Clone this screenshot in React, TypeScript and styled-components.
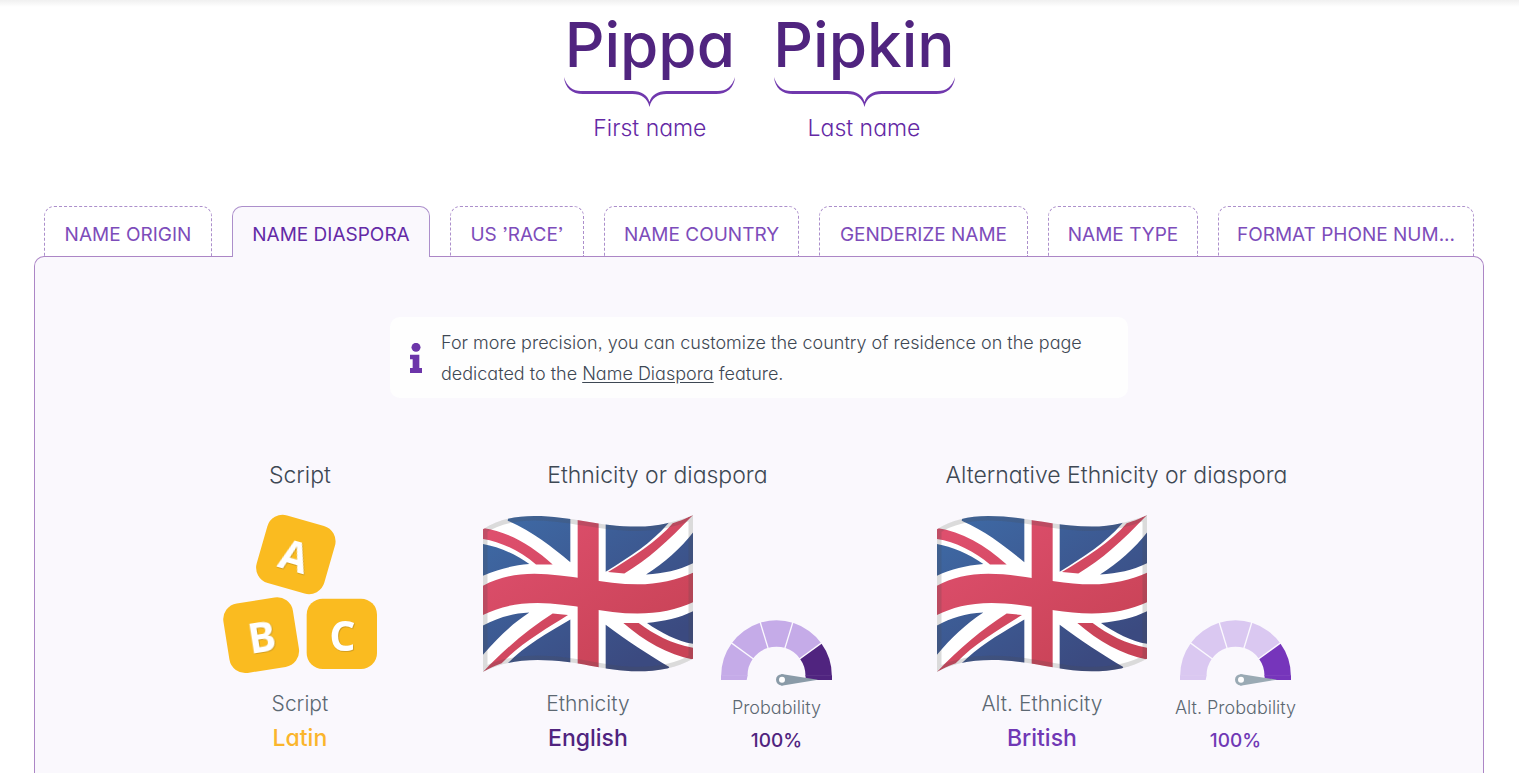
import React from 'react';
import styled, { createGlobalStyle } from 'styled-components';

const GlobalStyle = createGlobalStyle`
  *, *::before, *::after { box-sizing: border-box; }
  body {
    margin: 0;
    background: #fff;
    color: #3e4854;
    font-family: Inter, "Liberation Sans", sans-serif;
    font-feature-settings: "cv11", "ss03";
    font-weight: 300;
  }
`;

const Page = styled.div`
  display: flex;
  flex-direction: column;
  min-height: 100vh;
  background: linear-gradient(#f0f0f0, #fff 7px);
`;

const FullName = styled.header`
  display: flex;
  justify-content: center;
  gap: 38px;
  padding-top: 15px;
`;

const NamePart = styled.div`
  display: flex;
  flex-direction: column;
  align-items: center;
`;

const NameText = styled.div`
  font-size: 62px;
  line-height: 60px;
  font-weight: 500;
  color: #50247f;
`;

const BraceSvg = styled.svg`
  display: block;
  margin-top: 2px;
  fill: #7038ad;
`;

const NameLabel = styled.div`
  margin-top: 6px;
  font-size: 23px;
  line-height: 30px;
  color: #6429a5;
`;

const Main = styled.main`
  flex: 1;
  display: flex;
  flex-direction: column;
  margin: 63px 35px 0 34px;
`;

const Tabs = styled.div`
  display: grid;
  grid-template-columns: 168fr 198fr 134fr 195fr 209fr 150fr 256fr;
  gap: 20px;
  padding: 0 10px;
`;

const Tab = styled.button<{ $active?: boolean }>`
  min-width: 0;
  height: ${p => (p.$active ? 51 : 50)}px;
  margin-bottom: ${p => (p.$active ? -1 : 0)}px;
  padding: ${p => (p.$active ? 5 : 6)}px 0 0;
  position: relative;
  border: 1px ${p => (p.$active ? 'solid' : 'dashed')} #ac8fcb;
  border-bottom: 0;
  border-radius: 10px 10px 0 0;
  background: ${p => (p.$active ? '#faf8fd' : '#fff')};
  color: ${p => (p.$active ? '#632aa6' : '#7d4cba')};
  font: inherit;
  font-size: 19px;
  line-height: 28px;
  font-weight: 400;
  white-space: nowrap;
  cursor: pointer;
`;

const Panel = styled.section`
  flex: 1;
  display: flex;
  flex-direction: column;
  align-items: center;
  padding: 60px 20px 0;
  border: 1px solid #ac86c6;
  border-bottom: 0;
  border-radius: 10px 10px 0 0;
  background: #faf8fd;
`;

const Notice = styled.div`
  display: flex;
  align-items: center;
  gap: 19px;
  width: 100%;
  max-width: 738px;
  padding: 10px 20px 9px;
  border-radius: 10px;
  background: #fefefe;

  p {
    margin: 0;
    font-size: 18px;
    line-height: 31px;
  }

  a { color: inherit; text-underline-offset: 2px; }
  svg { flex: none; fill: #6c35a9; }
`;

const Results = styled.div`
  display: flex;
  justify-content: center;
  gap: 105px;
  margin-top: 62px;
`;

const Result = styled.section`
  display: flex;
  flex-direction: column;
  align-items: center;
`;

const Heading = styled.h2`
  margin: 0 0 25px;
  font-size: 23px;
  line-height: 30px;
  font-weight: 300;
`;

const Stats = styled.div`
  display: flex;
  align-items: flex-end;
  gap: 28px;
`;

const Stat = styled.div`
  display: flex;
  flex-direction: column;
  align-items: center;

  svg { display: block; }
`;

const Caption = styled.div<{ $small?: boolean }>`
  margin-top: ${p => (p.$small ? 9 : 18)}px;
  font-size: ${p => (p.$small ? 18 : 21)}px;
  line-height: ${p => (p.$small ? 26 : 28)}px;
  color: #5c6872;
`;

const Value = styled.div<{ $small?: boolean; $color: string }>`
  margin-top: ${p => (p.$small ? 8 : 5)}px;
  font-size: ${p => (p.$small ? 19 : 23)}px;
  line-height: ${p => (p.$small ? 24 : 30)}px;
  font-weight: 500;
  color: ${p => p.$color};
`;

function Brace({ width: w }: { width: number }) {
  const m = w / 2;
  const d =
    `M0 0 C3 10 9 14 17 14 H${m - 17} C${m - 8} 14 ${m - 2} 18 ${m} 25 ` +
    `C${m + 2} 18 ${m + 8} 14 ${m + 17} 14 H${w - 17} C${w - 9} 14 ${w - 3} 10 ${w} 0 ` +
    `C${w - 1} 11 ${w - 8} 17 ${w - 19} 17 H${m + 17} C${m + 8} 17 ${m + 2} 21 ${m} 30 ` +
    `C${m - 2} 21 ${m - 8} 17 ${m - 17} 17 H19 C8 17 1 11 0 0Z`;
  return (
    <BraceSvg width={w} height={30} viewBox={`0 0 ${w} 30`} aria-hidden>
      <path d={d} />
    </BraceSvg>
  );
}

const BlocksSvg = styled.svg`
  overflow: visible;

  text {
    fill: #fff;
    font-family: "Open Sans", sans-serif;
    font-weight: 700;
    font-size: 124px;
    text-anchor: middle;
    filter: drop-shadow(2px 2px 1px rgba(90, 70, 30, 0.35));
  }
`;

function Blocks() {
  return (
    <BlocksSvg width={156} height={157} viewBox="66 195 468 471" aria-hidden>
      <g fill="#fabb20">
        <rect x={182} y={208} width={211} height={211} rx={48} transform="rotate(16 287.5 313.5)" />
        <rect x={78} y={450} width={211} height={211} rx={48} transform="rotate(-9 183.5 555.5)" />
        <rect x={320} y={446} width={211} height={211} rx={48} />
      </g>
      <g transform="rotate(16 282 320)"><text x={282} y={364}>A</text></g>
      <g transform="rotate(-9 186 562)"><text x={186} y={606}>B</text></g>
      <text x={427} y={602}>C</text>
    </BlocksSvg>
  );
}

function Flag({ id }: { id: string }) {
  const outline =
    'M36 88 C80 60 130 48 190 48 C300 48 380 80 500 80 C560 80 620 65 666 45 V478 C620 505 560 516 500 516 C400 516 320 482 200 482 C130 482 80 495 36 518Z';
  return (
    <svg width={210} height={157} viewBox="36 45 630 473" preserveAspectRatio="none" aria-hidden>
      <defs>
        <clipPath id={`${id}-clip`}><path d={outline} /></clipPath>
        <linearGradient id={`${id}-blue`} gradientUnits="userSpaceOnUse" x1={150} y1={50} x2={450} y2={510}>
          <stop offset="0" stopColor="#3e68a3" />
          <stop offset="1" stopColor="#3b4a80" />
        </linearGradient>
        <linearGradient id={`${id}-red`} gradientUnits="userSpaceOnUse" x1={150} y1={50} x2={450} y2={510}>
          <stop offset="0" stopColor="#de4f6d" />
          <stop offset="1" stopColor="#c94357" />
        </linearGradient>
      </defs>
      <g clipPath={`url(#${id}-clip)`}>
        <path d={outline} fill="#fff" />
        <g fill={`url(#${id}-blue)`}>
          <path d="M110 62 L115 40 H298 V187 C240 140 190 98 110 62Z" />
          <path d="M36 132 C80 140 130 160 175 193 C120 198 80 208 36 228Z" />
          <path d="M404 60 H600 L590 72 C540 130 480 168 404 216Z" />
          <path d="M666 98 V190 C620 212 580 220 525 224 C580 190 630 145 666 98Z" />
          <path d="M36 378 C80 355 120 342 175 339 C120 375 80 415 36 466Z" />
          <path d="M298 360 V500 H104 L110 492 C160 440 230 400 298 360Z" />
          <path d="M404 376 C470 425 530 465 595 503 L585 520 H404Z" />
          <path d="M666 335 V433 C620 425 570 400 528 370 C580 365 625 355 666 335Z" />
        </g>
        <g fill={`url(#${id}-red)`}>
          <path d="M36 84 C110 95 180 135 245 194 H195 C150 155 90 125 36 117Z" />
          <path d="M666 45 C590 125 530 180 460 221 L411 217 C480 175 560 125 605 70 C630 62 645 55 666 45Z" />
          <path d="M245 342 L291 346 C230 385 150 430 92 492 C70 500 55 508 36 518 C100 450 170 390 245 342Z" />
          <path d="M457 370 H503 C550 405 600 432 666 445 V480 C590 465 520 425 457 370Z" />
          <path d="M36 258 C80 235 130 222 190 222 C290 222 400 254 500 254 C560 254 620 240 666 219 V308 C620 330 560 342 500 342 C400 342 300 310 200 310 C130 310 80 325 36 346Z" />
          <path d="M320 45 H383 V518 H320Z" />
        </g>
        <path d={outline} fill="none" stroke="#4a4a4a" strokeOpacity={0.2} strokeWidth={27} />
      </g>
    </svg>
  );
}

const polar = (r: number, deg: number) => {
  const a = (deg * Math.PI) / 180;
  return `${(223.5 - r * Math.cos(a)).toFixed(1)} ${(227 - r * Math.sin(a)).toFixed(1)}`;
};

const sector = (from: number, to: number) =>
  `M${polar(166, from)} A166 166 0 0 1 ${polar(166, to)} L${polar(87, to)} A87 87 0 0 0 ${polar(87, from)}Z`;

function Gauge({ base, lit, needle }: { base: string; lit: string; needle: string }) {
  return (
    <svg width={111} height={66} viewBox="57 60 333 198" aria-hidden>
      <path d={sector(0, 144)} fill={base} />
      <path d="M57 226 H137 L134 240 H57Z" fill={base} />
      <path d={sector(144, 180)} fill={lit} />
      <path d="M310 226 H390 V240 H312Z" fill={lit} />
      {[36, 73, 107, 144].map(a => (
        <path key={a} d={`M${polar(84, a)} L${polar(170, a)}`} stroke="#fbf9fe" strokeWidth={4} />
      ))}
      <path d="M238 222 L348 239 L238 257Z" fill={needle} />
      <circle cx={239} cy={239.5} r={17} fill={needle} />
      <circle cx={240} cy={239.5} r={9} fill="#fff" />
    </svg>
  );
}

const tabs = [
  'NAME ORIGIN',
  'NAME DIASPORA',
  'US ’RACE’',
  'NAME COUNTRY',
  'GENDERIZE NAME',
  'NAME TYPE',
  'FORMAT PHONE NUM...',
];

export default function App() {
  return (
    <>
      <GlobalStyle />
      <Page>
        <FullName>
          <NamePart>
            <NameText>Pippa</NameText>
            <Brace width={171} />
            <NameLabel>First name</NameLabel>
          </NamePart>
          <NamePart>
            <NameText>Pipkin</NameText>
            <Brace width={181} />
            <NameLabel>Last name</NameLabel>
          </NamePart>
        </FullName>
        <Main>
          <Tabs role="tablist">
            {tabs.map((t, i) => (
              <Tab key={t} type="button" role="tab" aria-selected={i === 1} $active={i === 1}>
                {t}
              </Tab>
            ))}
          </Tabs>
          <Panel role="tabpanel">
            <Notice>
              <svg width={12} height={30} viewBox="90 98 36 90" aria-hidden>
                <circle cx={108} cy={111} r={13.5} />
                <path d="M90 133 H118 V173 H126 V188 H90 V173 H98 V147 H90Z" />
              </svg>
              <p>
                For more precision, you can customize the country of residence on the page
                dedicated to the <a href="#name-diaspora">Name Diaspora</a> feature.
              </p>
            </Notice>
            <Results>
              <Result>
                <Heading>Script</Heading>
                <Stat>
                  <Blocks />
                  <Caption>Script</Caption>
                  <Value $color="#fab52c">Latin</Value>
                </Stat>
              </Result>
              <Result>
                <Heading>Ethnicity or diaspora</Heading>
                <Stats>
                  <Stat>
                    <Flag id="main" />
                    <Caption>Ethnicity</Caption>
                    <Value $color="#50247f">English</Value>
                  </Stat>
                  <Stat>
                    <Gauge base="#c5abe8" lit="#50247f" needle="#8a9ba8" />
                    <Caption $small>Probability</Caption>
                    <Value $small $color="#50247f">100%</Value>
                  </Stat>
                </Stats>
              </Result>
              <Result>
                <Heading>Alternative Ethnicity or diaspora</Heading>
                <Stats>
                  <Stat>
                    <Flag id="alt" />
                    <Caption>Alt. Ethnicity</Caption>
                    <Value $color="#7038b5">British</Value>
                  </Stat>
                  <Stat>
                    <Gauge base="#dac8f1" lit="#7635bb" needle="#9aaab4" />
                    <Caption $small>Alt. Probability</Caption>
                    <Value $small $color="#7038b5">100%</Value>
                  </Stat>
                </Stats>
              </Result>
            </Results>
          </Panel>
        </Main>
      </Page>
    </>
  );
}
